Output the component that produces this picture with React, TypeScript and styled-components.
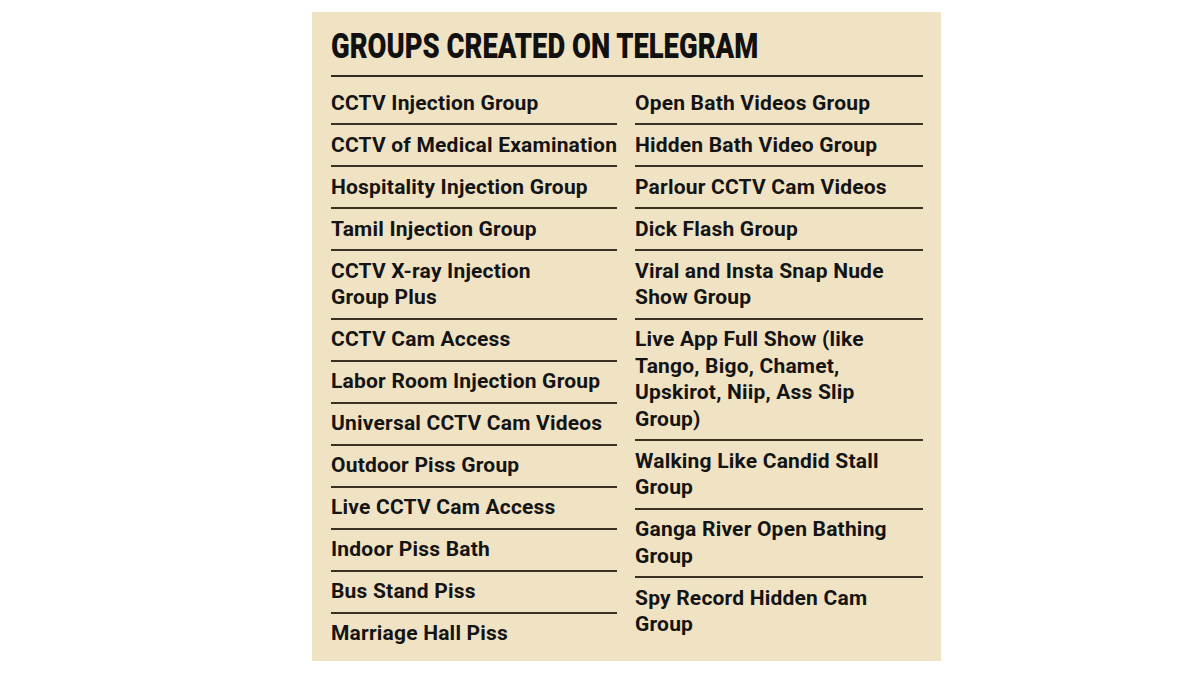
import React from "react";
import styled, { createGlobalStyle } from "styled-components";

const GlobalStyle = createGlobalStyle`
  html, body {
    margin: 0;
    padding: 0;
    background: #ffffff;
  }
  body {
    font-family: Roboto, "DejaVu Sans Condensed", sans-serif;
  }
`;

const Page = styled.div`
  width: 1200px;
  height: 675px;
  padding-top: 12px;
  padding-left: 312px;
  box-sizing: border-box;
`;

const Panel = styled.section`
  width: 629px;
  background: #f0e3c4;
  padding: 15px 18px 5px 19px;
  box-sizing: border-box;
`;

const Title = styled.h1`
  margin: 0;
  padding-bottom: 8px;
  border-bottom: 2px solid #342c20;
  font-family: Roboto, "DejaVu Sans Condensed", sans-serif;
  font-weight: 900;
  font-size: 35px;
  line-height: 40px;
  color: #111111;
  white-space: nowrap;
  overflow: hidden;
`;

const Squeeze = styled.span<{ $x: number }>`
  display: inline-block;
  transform: scaleX(${(p) => p.$x});
  transform-origin: left center;
  white-space: nowrap;
`;

const Columns = styled.div`
  display: grid;
  grid-template-columns: 286px 288px;
  column-gap: 18px;
  padding-top: 6px;
  align-items: start;
`;

const List = styled.ul`
  margin: 0;
  padding: 0;
  list-style: none;
`;

const Item = styled.li<{ $last?: boolean }>`
  padding: 6.5px 0 7px;
  border-bottom: 2px solid ${(p) => (p.$last ? "transparent" : "#3a3124")};
  font-family: Roboto, "DejaVu Sans Condensed", sans-serif;
  font-weight: 700;
  font-size: 21px;
  line-height: 26.5px;
  letter-spacing: 0.2px;
  color: #141414;
  white-space: nowrap;
`;

const left: string[][] = [
  ["CCTV Injection Group"],
  ["CCTV of Medical Examination"],
  ["Hospitality Injection Group"],
  ["Tamil Injection Group"],
  ["CCTV X-ray Injection", "Group Plus"],
  ["CCTV Cam Access"],
  ["Labor Room Injection Group"],
  ["Universal CCTV Cam Videos"],
  ["Outdoor Piss Group"],
  ["Live CCTV Cam Access"],
  ["Indoor Piss Bath"],
  ["Bus Stand Piss"],
  ["Marriage Hall Piss"],
];

const right: string[][] = [
  ["Open Bath Videos Group"],
  ["Hidden Bath Video Group"],
  ["Parlour CCTV Cam Videos"],
  ["Dick Flash Group"],
  ["Viral and Insta Snap Nude", "Show Group"],
  ["Live App Full Show (like", "Tango, Bigo, Chamet,", "Upskirot, Niip, Ass Slip", "Group)"],
  ["Walking Like Candid Stall", "Group"],
  ["Ganga River Open Bathing", "Group"],
  ["Spy Record Hidden Cam", "Group"],
];

function Column({ items }: { items: string[][] }) {
  return (
    <List>
      {items.map((lines, i) => (
        <Item key={i} $last={i === items.length - 1}>
          {lines.map((l, j) => (
            <React.Fragment key={j}>
              {l}
              {j < lines.length - 1 && <br />}
            </React.Fragment>
          ))}
        </Item>
      ))}
    </List>
  );
}

export default function App() {
  return (
    <>
      <GlobalStyle />
      <Page>
        <Panel>
          <Title>
            <Squeeze $x={0.783}>GROUPS CREATED ON TELEGRAM</Squeeze>
          </Title>
          <Columns>
            <Column items={left} />
            <Column items={right} />
          </Columns>
        </Panel>
      </Page>
    </>
  );
}
